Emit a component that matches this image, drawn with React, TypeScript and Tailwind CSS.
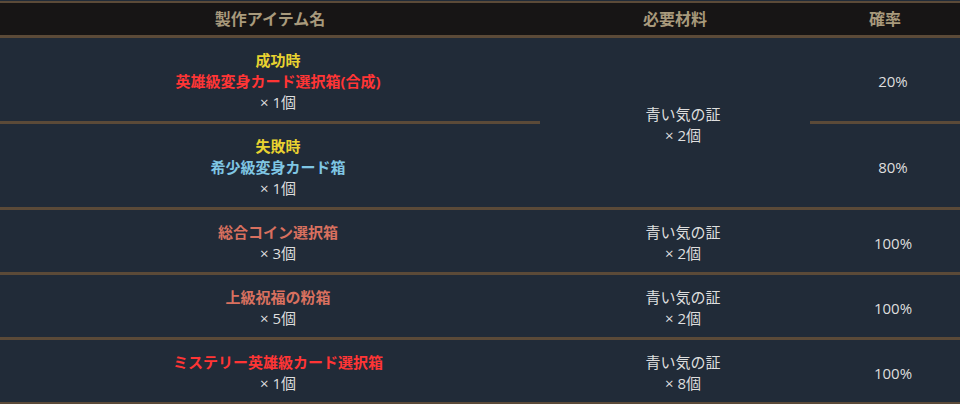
const font = { fontFamily: '"Open Sans", "Noto Sans CJK JP", sans-serif' };

const head =
  'bg-[#171515] border-t-2 border-b-[3px] border-[#5b4a38] h-[37px] text-[16px] leading-5 font-bold text-[#a89a7c] text-center align-middle';
const cell =
  'bg-[#212b38] border-b-[3px] border-[#5b4a38] pl-4 pt-3 pb-2 text-center align-middle text-[15px] leading-[21px] text-[#dedede]';

function Qty({ n }: { n: number }) {
  return <div>× {n}個</div>;
}

function Material({ n }: { n: number }) {
  return (
    <>
      <div>青い気の証</div>
      <Qty n={n} />
    </>
  );
}

const simple = [
  { name: '総合コイン選択箱', color: 'text-[#d8705f]', qty: 3, mat: 2 },
  { name: '上級祝福の粉箱', color: 'text-[#d8705f]', qty: 5, mat: 2 },
  { name: 'ミステリー英雄級カード選択箱', color: 'text-[#ff3535]', qty: 1, mat: 8 },
];

export default function App() {
  return (
    <div className="w-[960px] h-[404px] bg-[#212b38] pt-px overflow-hidden" style={font}>
      <table className="w-[960px] table-fixed border-separate border-spacing-0">
        <colgroup>
          <col className="w-[540px]" />
          <col className="w-[270px]" />
          <col className="w-[150px]" />
        </colgroup>
        <thead>
          <tr>
            <th className={head}>製作アイテム名</th>
            <th className={head}>必要材料</th>
            <th className={head}>確率</th>
          </tr>
        </thead>
        <tbody>
          <tr>
            <td className={cell}>
              <div className="font-bold text-[#e8d230]">成功時</div>
              <div className="font-bold text-[#ff3535]">英雄級変身カード選択箱(合成)</div>
              <Qty n={1} />
            </td>
            <td className={cell} rowSpan={2}>
              <Material n={2} />
            </td>
            <td className={cell}>20%</td>
          </tr>
          <tr>
            <td className={cell}>
              <div className="font-bold text-[#e8d230]">失敗時</div>
              <div className="font-bold text-[#7fc6e4]">希少級変身カード箱</div>
              <Qty n={1} />
            </td>
            <td className={cell}>80%</td>
          </tr>
          {simple.map((r) => (
            <tr key={r.name}>
              <td className={cell}>
                <div className={`font-bold ${r.color}`}>{r.name}</div>
                <Qty n={r.qty} />
              </td>
              <td className={cell}>
                <Material n={r.mat} />
              </td>
              <td className={cell}>100%</td>
            </tr>
          ))}
        </tbody>
      </table>
    </div>
  );
}
